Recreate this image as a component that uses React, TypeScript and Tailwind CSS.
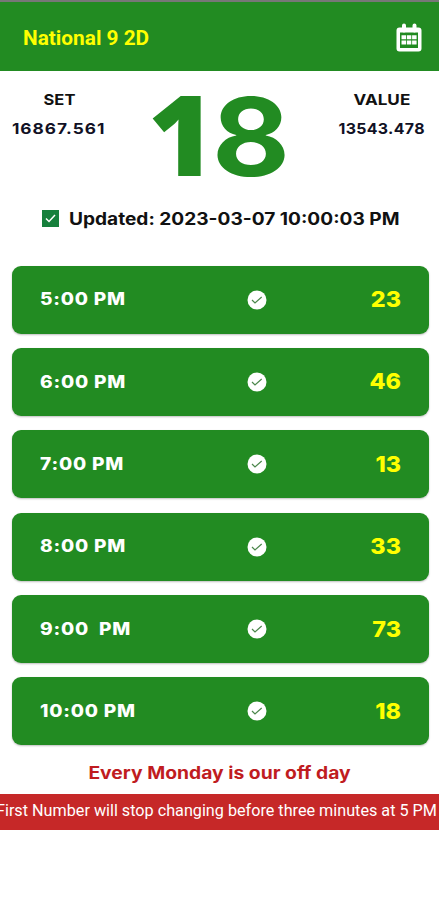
type Draw = {
  time: string;
  number: string;
};

const draws: Draw[] = [
  { time: "5:00 PM", number: "23" },
  { time: "6:00 PM", number: "46" },
  { time: "7:00 PM", number: "13" },
  { time: "8:00 PM", number: "33" },
  { time: "9:00  PM", number: "73" },
  { time: "10:00 PM", number: "18" },
];

function CalendarIcon() {
  return (
    <svg width="26" height="30" viewBox="0 0 26 30" fill="none">
      <path d="M8 2.500v5M18.500 2.500v5" stroke="white" strokeWidth="4" strokeLinecap="round" />
      <path
        fill="white"
        fillRule="evenodd"
        d="M3.500 4.500h19a3 3 0 0 1 3 3v18a3 3 0 0 1-3 3h-19a3 3 0 0 1-3-3v-18a3 3 0 0 1 3-3ZM4 9.500v15.500h18V9.500Z"
      />
      <path
        fill="white"
        d="M5.500 12.300h4.500v4H5.500zM10.800 12.300h4.500v4h-4.500zM16.100 12.300h4.500v4h-4.500zM5.500 17.500h4.500v4H5.500zM10.800 17.500h4.500v4h-4.500zM16.100 17.500h4.500v4h-4.500z"
      />
    </svg>
  );
}

function CheckCircle() {
  return (
    <svg width="20" height="20" viewBox="0 0 20 20" fill="none">
      <circle cx="10" cy="10" r="9.500" fill="white" />
      <path d="m5 10 3 3 6.700-6" stroke="#4c874c" strokeWidth="1.200" />
    </svg>
  );
}

function DrawRow({ time, number }: Draw) {
  return (
    <div className="grid h-[68px] grid-cols-[207.500px_76px_1fr] items-center rounded-[9px] bg-[#228b22] pr-[28px] pl-[28px] shadow-[0_1px_2px_rgba(0,0,0,0.25)]">
      <span className="mt-[1px] origin-left scale-x-[1.125] text-[17px] font-extrabold tracking-[0.700px] whitespace-pre text-white">
        {time}
      </span>
      <CheckCircle />
      <span className="origin-right scale-x-[1.06] text-right text-[22px] font-extrabold text-[#ffff00]">
        {number}
      </span>
    </div>
  );
}

export default function App() {
  return (
    <div className="h-[900px] w-[439px] overflow-hidden bg-white font-[Inter,sans-serif]">
      <header className="flex h-[71px] items-center justify-between border-t-2 border-[#777777] bg-[#228b22] pt-[2px] pr-[17px] pl-[23px]">
        <h1 className="origin-left scale-x-[1.04] font-[Roboto,sans-serif] text-[20px] font-bold text-[#ffff00]">
          National 9 2D
        </h1>
        <CalendarIcon />
      </header>

      <section className="flex h-[125px] pt-[18px] text-[15px] font-bold text-[#111111]">
        <div className="flex w-[118px] flex-col items-center">
          <span className="h-[29px] scale-x-110 leading-[22px]">SET</span>
          <span className="scale-x-[1.15] leading-[22px] tracking-[0.900px] text-[#111125]">16867.561</span>
        </div>
        <div className="-mt-[5px] ml-[30px] flex items-baseline leading-[98px] text-[#228b22]">
          <span className="origin-left scale-x-[1.03] font-['Open_Sans',sans-serif] text-[111px] font-extrabold">
            1
          </span>
          <span className="-ml-[1px] origin-left scale-x-[1.1] text-[109px]">8</span>
        </div>
        <div className="ml-auto flex w-[115px] flex-col items-center">
          <span className="h-[29px] scale-x-[1.14] leading-[22px]">VALUE</span>
          <span className="scale-x-[1.06] leading-[22px] tracking-[0.300px] text-[#111125]">13543.478</span>
        </div>
      </section>

      <div className="flex h-[46px] items-center pl-[42px]">
        <svg className="-mt-[1px]" width="17" height="17" viewBox="0 0 17 17" fill="none">
          <path fill="#16803c" d="M0 0h17v17H0z" />
          <path d="m4 8.500 3 3 6-6.500" stroke="white" strokeWidth="1.500" />
        </svg>
        <span className="mt-[2px] ml-[10px] origin-left scale-x-[1.124] text-[17px] font-bold whitespace-nowrap text-[#111111]">
          Updated: 2023-03-07 10:00:03 PM
        </span>
      </div>

      <main className="mt-[23.500px] flex flex-col gap-[14.400px] pr-[10px] pl-[11.500px]">
        {draws.map((draw) => (
          <DrawRow key={draw.time} {...draw} />
        ))}
      </main>

      <p className="flex h-[49px] items-center justify-center pt-[7px] text-[17px] font-bold text-[#c01c1f]">
        <span className="scale-x-[1.135] whitespace-nowrap">Every Monday is our off day</span>
      </p>

      <div className="flex h-[36px] items-center bg-[#c62828] font-[Roboto,sans-serif] text-[16.200px] whitespace-nowrap text-white">
        <span className="-mt-[2px] -ml-[4px]">First Number will stop changing before three minutes at 5 PM</span>
      </div>
    </div>
  );
}
